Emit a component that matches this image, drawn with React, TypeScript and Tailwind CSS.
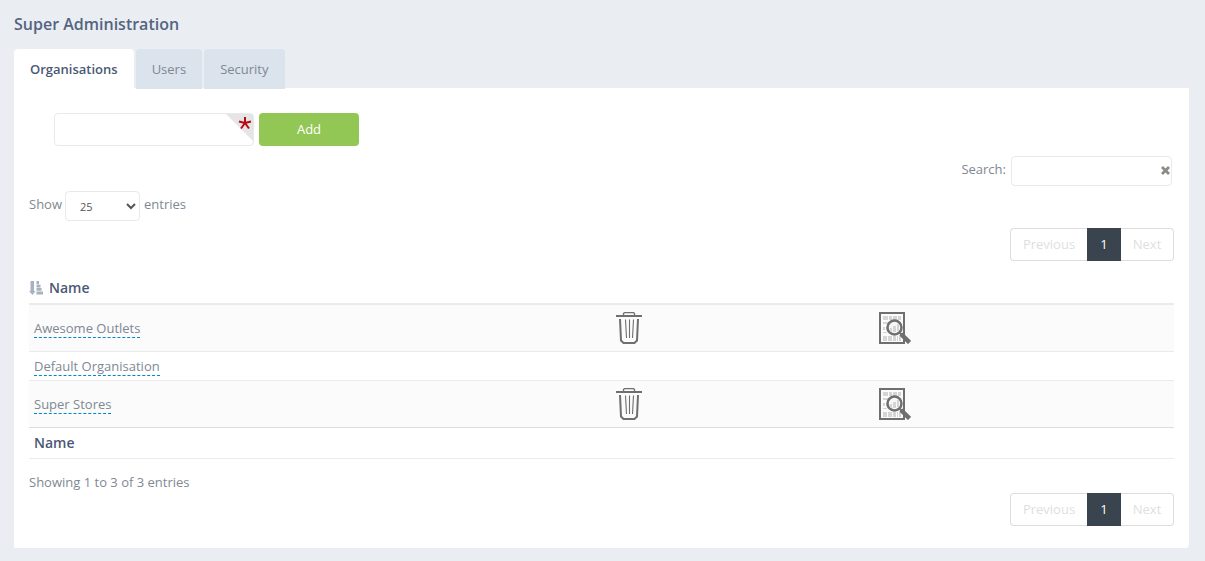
import { useState } from 'react';
import clsx from 'clsx';

const tabs = ['Organisations', 'Users', 'Security'];

const organisations = [
    { name: 'Awesome Outlets', removable: true },
    { name: 'Default Organisation', removable: false },
    { name: 'Super Stores', removable: true }
];

const SortIcon = () => (
    <svg width="14" height="14" viewBox="0 0 14 14" fill="#a7b1bf" aria-hidden="true">
        <path d="M1.500 0h3.500v10h1.500L3.500 14 0 10h1.500z" />
        <path d="M7.500 0H10v3.200H7.500zM7.500 3.800h4v2.600h-4zM7.500 7h5v2.800h-5zM7.500 10.400H14v3.200H7.500z" />
    </svg>
);

const TrashIcon = () => (
    <svg width="26" height="32" viewBox="0 0 26 32" fill="none" stroke="#706e6e" aria-hidden="true">
        <path d="M0 4h26" strokeWidth="2" />
        <path d="M7.500 3.500V1.500l1-1h9l1 1v2" strokeWidth="1.300" />
        <path d="M4 7l1 21.500L7.500 31h11l2.500-2.500L22 7" strokeWidth="2" />
        <path d="M9.500 7.500l1 18.500M13.500 7.500V26M17.500 7.500l-1 18.500" strokeWidth="1.100" />
    </svg>
);

const ReportIcon = () => (
    <svg width="32" height="32" viewBox="0 0 32 32" fill="none" aria-hidden="true">
        <rect x="1" y="1" width="24" height="30" stroke="#706e6e" strokeWidth="2" />
        <path
            d="M4 4h5v4H4zM10 4h3v4h-3zM14 4h4v4h-4zM19 4h3v4h-3zM4 10h6v2H4zM18 10h4v2h-4zM4 15h2v3H4zM7 15h3v3H7zM4 20h4v1H4zM4 24h4v5H4zM9 24h4v5H9zM14 24h3v5h-3zM18 24h1v5h-1zM20 24h2v5h-2z"
            fill="#d5d5d5"
        />
        <circle cx="15.500" cy="15.500" r="7" fill="#f7f7f7" stroke="#706e6e" strokeWidth="2.500" />
        <path d="M11 16h2v4h-2zM14 14h3v6h-3zM18 12h2v7h-2z" fill="#d5d5d5" />
        <path d="M20.500 20.500l2 2" stroke="#706e6e" strokeWidth="2.200" />
        <path d="M22 22l8.500 8.500" stroke="#706e6e" strokeWidth="4.500" />
    </svg>
);

const Pagination = () => (
    <nav className="flex justify-end" aria-label="Pages">
        <button className="h-[33px] w-[77px] rounded-l-sm border border-r-0 border-[#ddd] pb-0.5 text-[#dcdfe2]">Previous</button>
        <button className="h-[33px] w-[34px] bg-[#3a444e] pb-0.5 text-white">1</button>
        <button className="h-[33px] w-[53px] rounded-r-sm border border-l-0 border-[#ddd] pb-0.5 text-[#dcdfe2]">Next</button>
    </nav>
);

const App = () => {
    const [active, setActive] = useState('Organisations');
    const [name, setName] = useState('');
    const [search, setSearch] = useState('');

    const rows = organisations.filter((o) => o.name.toLowerCase().includes(search.toLowerCase()));

    return (
        <div className="min-h-screen bg-[#eaeef3] px-4 pt-[14px] pb-[13px] pl-[14px] font-['Open_Sans',sans-serif] text-[13px] leading-5 text-[#7f8893]">
            <h1 className="text-base leading-5 font-semibold text-[#546480]">Super Administration</h1>

            <div className="mt-[15px] -mb-px flex gap-0.5" role="tablist">
                {tabs.map((tab) => (
                    <button
                        key={tab}
                        role="tab"
                        aria-selected={tab === active}
                        onClick={() => setActive(tab)}
                        className={clsx(
                            'h-10 rounded-t-sm px-4',
                            tab === active ? 'bg-white font-semibold text-[#4b5875]' : 'relative bg-[#dbe3ec]'
                        )}
                    >
                        {tab}
                    </button>
                ))}
            </div>

            <main className="rounded-br-sm bg-white px-[15px] pt-[25px] pb-[22px]">
                <form className="flex gap-[5px] pl-[25px]" onSubmit={(e) => e.preventDefault()}>
                    <div className="relative">
                        <input
                            aria-label="Organisation name"
                            required
                            value={name}
                            onChange={(e) => setName(e.target.value)}
                            className="block h-[33px] w-[200px] rounded-sm border border-[#e9e9e9] px-3 outline-none"
                        />
                        <svg className="pointer-events-none absolute top-px right-px" width="27" height="27" viewBox="0 0 27 27" aria-hidden="true">
                            <path d="M0 0h27v27z" fill="#e5e5e5" />
                            <path d="M19 9V3M19 9l-6-1.500M19 9l6-1.500M19 9l-4 5.500M19 9l4 5.500" stroke="#b80a14" strokeWidth="2" />
                        </svg>
                    </div>
                    <button className="h-[33px] w-[100px] rounded-sm bg-[#92c755] pb-0.5 text-white">Add</button>
                </form>

                <div className="mt-2.5 flex items-center justify-end gap-[5px] pr-0.5">
                    <label htmlFor="search" className="pb-1">Search:</label>
                    <div className="relative">
                        <input
                            id="search"
                            value={search}
                            onChange={(e) => setSearch(e.target.value)}
                            className="block h-[30px] w-[161px] rounded-sm border border-[#e9e9e9] pr-5 pl-3 outline-none"
                        />
                        <button aria-label="Clear" onClick={() => setSearch('')} className="absolute top-[10px] right-[2px]">
                            <svg width="9" height="9" viewBox="0 0 9 9" stroke="#8b8b84" strokeWidth="2.800" aria-hidden="true">
                                <path d="M1 1l7 7M8 1L1 8" />
                            </svg>
                        </button>
                    </div>
                </div>

                <div className="mt-[5px] flex items-center">
                    <label htmlFor="length" className="pr-[3px] pb-1">Show</label>
                    <select
                        id="length"
                        defaultValue="25"
                        className="h-[30px] w-[75px] rounded-sm border border-[#e9e9e9] bg-white px-2.5 text-[11px] text-[#555]"
                    >
                        <option>10</option>
                        <option>25</option>
                        <option>50</option>
                    </select>
                    <span className="pb-1 pl-1">entries</span>
                </div>

                <div className="mt-[7px]">
                    <Pagination />
                </div>

                <table className="mt-[11px] w-full table-fixed border-separate border-spacing-0 text-left">
                    <colgroup>
                        <col className="w-[51%]" />
                        <col className="w-[23%]" />
                        <col className="w-[26%]" />
                    </colgroup>
                    <thead className="text-sm leading-5 text-[#4b5875]">
                        <tr>
                            <th className="h-[33px] border-b-2 border-[#ebebeb] p-0 font-semibold">
                                <span className="flex items-center gap-1.5">
                                    <SortIcon />
                                    Name
                                </span>
                            </th>
                            <th className="border-b-2 border-[#ebebeb]" />
                            <th className="border-b-2 border-[#ebebeb]" />
                        </tr>
                    </thead>
                    <tbody>
                        {rows.map((org) => (
                            <tr
                                key={org.name}
                                className="odd:bg-[#fbfbfb] [&>td]:border-b [&>td]:border-[#ebebeb] last:[&>td]:border-[#ddd]"
                            >
                                <td className={clsx('px-[5px] py-0', org.removable ? 'h-[47px]' : 'h-[29px]')}>
                                    <a href="#" className="border-b border-dashed border-[#0088cc]">
                                        {org.name}
                                    </a>
                                </td>
                                <td className="px-[3px] py-0">
                                    {org.removable && (
                                        <button aria-label={`Delete ${org.name}`} className="block">
                                            <TrashIcon />
                                        </button>
                                    )}
                                </td>
                                <td className="px-[3px] py-0">
                                    {org.removable && (
                                        <button aria-label={`View ${org.name}`} className="block">
                                            <ReportIcon />
                                        </button>
                                    )}
                                </td>
                            </tr>
                        ))}
                    </tbody>
                    <tfoot className="text-sm leading-5 text-[#4b5875]">
                        <tr>
                            <th colSpan={3} className="h-[31px] border-b border-[#ebebeb] px-[5px] py-0 font-semibold">
                                Name
                            </th>
                        </tr>
                    </tfoot>
                </table>

                <p className="mt-[13px] mb-px">Showing 1 to {rows.length} of {rows.length} entries</p>
                <Pagination />
            </main>
        </div>
    );
};

export default App;
